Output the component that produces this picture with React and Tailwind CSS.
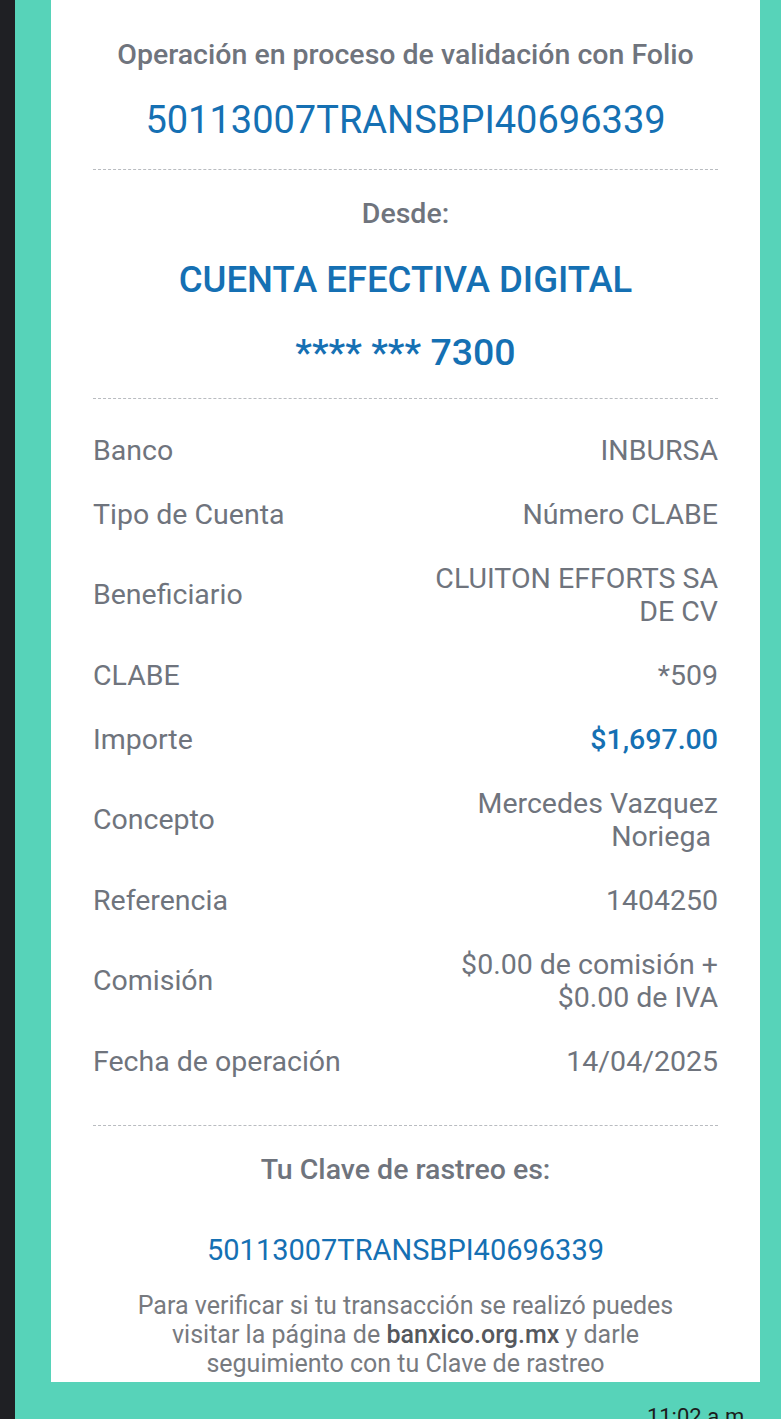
export default function App() {
  const gray = "text-[#6f747d]";
  const blue = "text-[#1570b3]";
  const rows = [
    { label: "Banco", value: ["INBURSA"] },
    { label: "Tipo de Cuenta", value: ["Número CLABE"] },
    { label: "Beneficiario", value: ["CLUITON EFFORTS SA", "DE CV"] },
    { label: "CLABE", value: ["*509"] },
    { label: "Importe", value: ["$1,697.00"], blue: true },
    { label: "Concepto", value: ["Mercedes Vazquez", "Noriega\u00a0"] },
    { label: "Referencia", value: ["1404250"] },
    { label: "Comisión", value: ["$0.00 de comisión +", "$0.00 de IVA"] },
    { label: "Fecha de operación", value: ["14/04/2025"] },
  ];
  const Dash = ({ className = "" }) => (
    <div className={"border-t border-dashed border-[#b9bcc0] " + className} />
  );
  return (
    <div
      className="flex w-[781px] h-[1419px] overflow-hidden bg-[#57d3b9]"
      style={{ fontFamily: "Roboto, 'Noto Sans', sans-serif" }}
    >
      <div className="w-[15px] shrink-0 bg-[#1f2024]" />
      <div className="flex flex-col pl-[36px] flex-1">
        <div className="bg-white w-[709px] h-[1382px] shrink-0 px-[42px] flex flex-col">
          <div className={`mt-[37px] text-center text-[28.5px] leading-[36px] font-medium ${gray}`}>
            Operación en proceso de validación con Folio
          </div>
          <div className={`mt-[26px] text-center text-[38px] leading-[42px] ${blue}`}>
            50113007TRANSBPI40696339
          </div>
          <Dash className="mt-[28px]" />
          <div className={`mt-[26px] text-center text-[28.5px] leading-[36px] font-medium ${gray}`}>
            Desde:
          </div>
          <div className={`mt-[28px] text-center text-[36.5px] leading-[40px] font-medium ${blue}`}>
            CUENTA EFECTIVA DIGITAL
          </div>
          <div className={`mt-[30px] text-center text-[37.5px] leading-[44px] font-medium ${blue}`}>
            **** *** 7300
          </div>
          <Dash className="mt-[24px]" />
          <div className="mt-[19px] flex flex-col">
            {rows.map((r) => (
              <div key={r.label} className="flex items-center justify-between py-[15.5px]">
                <div className={`text-[28.5px] leading-[33px] ${gray}`}>{r.label}</div>
                <div
                  className={`text-right text-[28.5px] leading-[33px] ${
                    r.blue ? blue + " font-medium" : gray
                  }`}
                >
                  {r.value.map((v) => (
                    <div key={v}>{v}</div>
                  ))}
                </div>
              </div>
            ))}
          </div>
          <Dash className="mt-[32px]" />
          <div className={`mt-[26px] text-center text-[28.5px] leading-[36px] font-medium ${gray}`}>
            Tu Clave de rastreo es:
          </div>
          <div className={`mt-[45px] text-center text-[29px] leading-[34px] ${blue}`}>
            50113007TRANSBPI40696339
          </div>
          <div className="mt-[24px] text-center text-[25px] leading-[29px] text-[#777a7f]">
            Para verificar si tu transacción se realizó puedes
            <br />
            visitar la página de <span className="font-medium text-[#55585d]">banxico.org.mx</span> y darle
            <br />
            seguimiento con tu Clave de rastreo
          </div>
        </div>
        <div className="flex justify-end pr-[31px] pt-[21px]">
          <span className="text-[22px] leading-[28px] whitespace-nowrap text-[#1c1c1c]">11:02 a.m.</span>
        </div>
      </div>
    </div>
  );
}
